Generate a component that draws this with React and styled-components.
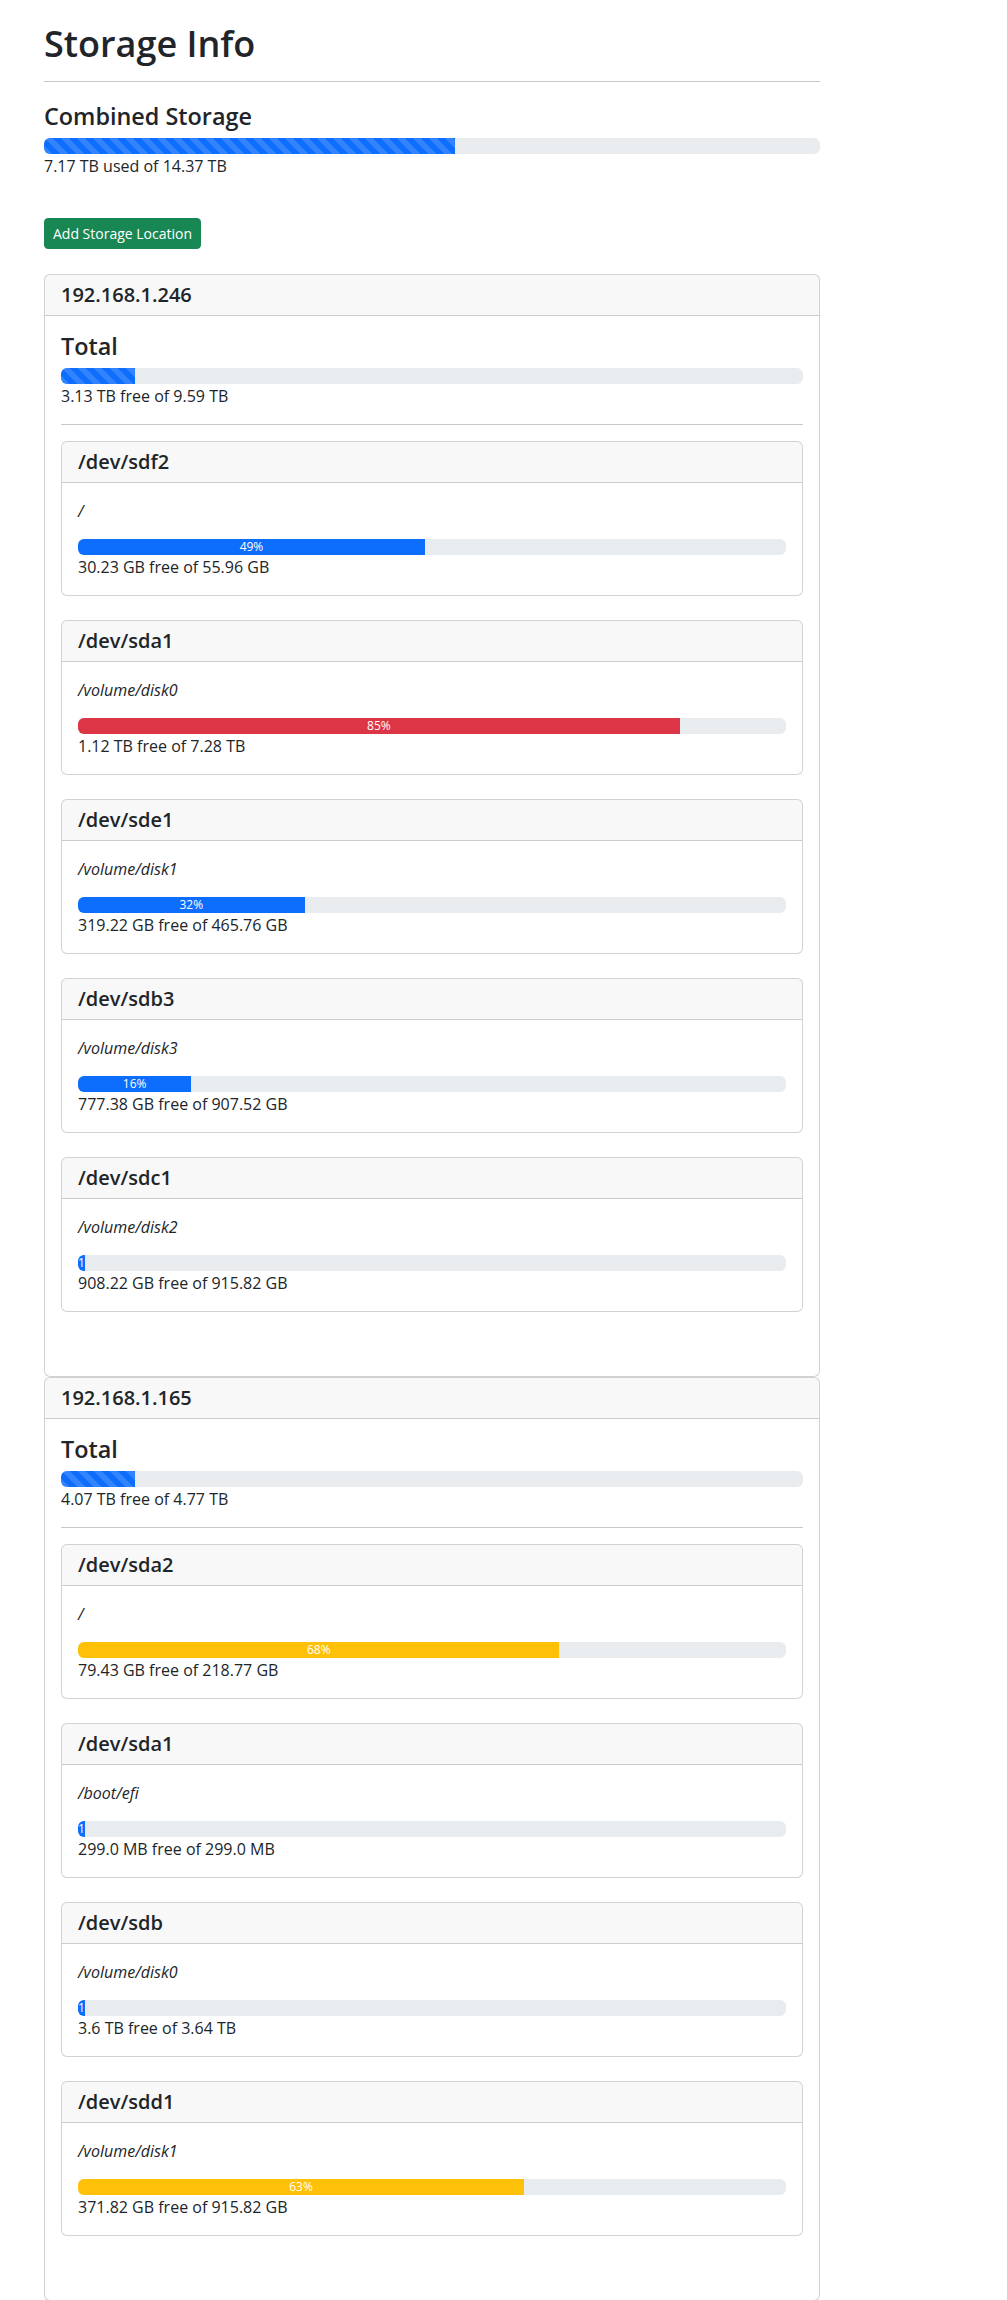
import React from 'react'
import styled, { createGlobalStyle, css } from 'styled-components'

const GlobalStyle = createGlobalStyle`
  *, *::before, *::after {
    box-sizing: border-box;
  }
  body {
    margin: 0;
    background: #fff;
    color: #212529;
    font-family: "Segoe UI", "Open Sans", "Noto Sans", sans-serif;
    font-size: 16px;
    line-height: 1.5;
  }
`

const Page = styled.div`
  width: 820px;
  padding: 21px 0 0 44px;
`

const Title = styled.h1`
  margin: 0;
  font-size: 36px;
  font-weight: 600;
  line-height: 1.25;
`

const Divider = styled.hr`
  margin: ${({ $top = 16 }) => $top}px 0 ${({ $bottom = 16 }) => $bottom}px;
  border: 0;
  border-top: 1px solid #212529;
  opacity: 0.25;
`

const SectionTitle = styled.h4`
  margin: 0 0 8px;
  font-size: 23.4px;
  font-weight: 600;
  line-height: 1.2;
`

const Progress = styled.div`
  display: flex;
  height: 16px;
  overflow: hidden;
  background: #e9ecef;
  border-radius: 6px;
  font-size: 12px;
`

const barColors = {
  primary: '#0d6efd',
  danger: '#dc3545',
  warning: '#ffc107',
}

const Bar = styled.div`
  display: flex;
  flex-direction: column;
  justify-content: center;
  overflow: hidden;
  color: #fff;
  text-align: center;
  white-space: nowrap;
  line-height: 1;
  background-color: ${({ $variant = 'primary' }) => barColors[$variant]};
  ${({ $striped }) => $striped && css`
    background-image: linear-gradient(
      45deg,
      rgba(255, 255, 255, 0.15) 25%,
      transparent 25%,
      transparent 50%,
      rgba(255, 255, 255, 0.15) 50%,
      rgba(255, 255, 255, 0.15) 75%,
      transparent 75%,
      transparent
    );
    background-size: 16px 16px;
  `}
`

const UsageText = styled.div`
  line-height: 24px;
`

const AddButton = styled.button`
  display: inline-block;
  margin: 40px 0 25px;
  padding: 4px 8px;
  border: 1px solid #198754;
  border-radius: 4px;
  background: #198754;
  color: #fff;
  font-family: inherit;
  font-size: 14px;
  line-height: 21px;
  cursor: pointer;
`

const Card = styled.div`
  border: 1px solid rgba(0, 0, 0, 0.175);
  border-radius: 6px;
  background: #fff;
  margin-bottom: ${({ $gap = 0 }) => $gap}px;
  overflow: hidden;
`

const CardHeader = styled.div`
  padding: 8px 16px;
  background: rgba(33, 37, 41, 0.03);
  border-bottom: 1px solid rgba(0, 0, 0, 0.175);
`

const CardTitle = styled.h5`
  margin: 0;
  font-size: 20px;
  font-weight: 600;
  line-height: 1.2;
`

const CardBody = styled.div`
  padding: 16px;
`

const Mount = styled.p`
  margin: 0 0 16px;
  font-style: italic;
  line-height: 24px;
`

const Spacer = styled.div`
  height: 24px;
`

const hosts = [
  {
    ip: '192.168.1.246',
    total: '3.13 TB free of 9.59 TB',
    fill: 10,
    disks: [
      { dev: '/dev/sdf2', mount: '/', pct: 49, variant: 'primary', usage: '30.23 GB free of 55.96 GB' },
      { dev: '/dev/sda1', mount: '/volume/disk0', pct: 85, variant: 'danger', usage: '1.12 TB free of 7.28 TB' },
      { dev: '/dev/sde1', mount: '/volume/disk1', pct: 32, variant: 'primary', usage: '319.22 GB free of 465.76 GB' },
      { dev: '/dev/sdb3', mount: '/volume/disk3', pct: 16, variant: 'primary', usage: '777.38 GB free of 907.52 GB' },
      { dev: '/dev/sdc1', mount: '/volume/disk2', pct: 1, variant: 'primary', usage: '908.22 GB free of 915.82 GB' },
    ],
  },
  {
    ip: '192.168.1.165',
    total: '4.07 TB free of 4.77 TB',
    fill: 10,
    disks: [
      { dev: '/dev/sda2', mount: '/', pct: 68, variant: 'warning', usage: '79.43 GB free of 218.77 GB' },
      { dev: '/dev/sda1', mount: '/boot/efi', pct: 1, variant: 'primary', usage: '299.0 MB free of 299.0 MB' },
      { dev: '/dev/sdb', mount: '/volume/disk0', pct: 1, variant: 'primary', usage: '3.6 TB free of 3.64 TB' },
      { dev: '/dev/sdd1', mount: '/volume/disk1', pct: 63, variant: 'warning', usage: '371.82 GB free of 915.82 GB' },
    ],
  },
]

const DiskCard = ({ dev, mount, pct, variant, usage }) => (
  <Card $gap={24}>
    <CardHeader>
      <CardTitle>{dev}</CardTitle>
    </CardHeader>
    <CardBody>
      <Mount>{mount}</Mount>
      <Progress>
        <Bar $variant={variant} style={{ width: `${pct}%` }}>{pct}%</Bar>
      </Progress>
      <UsageText>{usage}</UsageText>
    </CardBody>
  </Card>
)

const HostCard = ({ ip, total, fill, disks }) => (
  <Card>
    <CardHeader>
      <CardTitle>{ip}</CardTitle>
    </CardHeader>
    <CardBody>
      <SectionTitle>Total</SectionTitle>
      <Progress>
        <Bar $striped style={{ width: `${fill}%` }} />
      </Progress>
      <UsageText>{total}</UsageText>
      <Divider />
      {disks.map((d) => (
        <DiskCard key={d.dev + d.mount} {...d} />
      ))}
      <Spacer />
    </CardBody>
  </Card>
)

const App = () => {
  return (
    <>
      <GlobalStyle />
      <Page>
        <Title>Storage Info</Title>
        <Divider $top={15} $bottom={20} />
        <SectionTitle>Combined Storage</SectionTitle>
        <Progress>
          <Bar $striped style={{ width: '53%' }} />
        </Progress>
        <UsageText>7.17 TB used of 14.37 TB</UsageText>
        <AddButton>Add Storage Location</AddButton>
        {hosts.map((h) => (
          <HostCard key={h.ip} {...h} />
        ))}
      </Page>
    </>
  )
}

export default App
